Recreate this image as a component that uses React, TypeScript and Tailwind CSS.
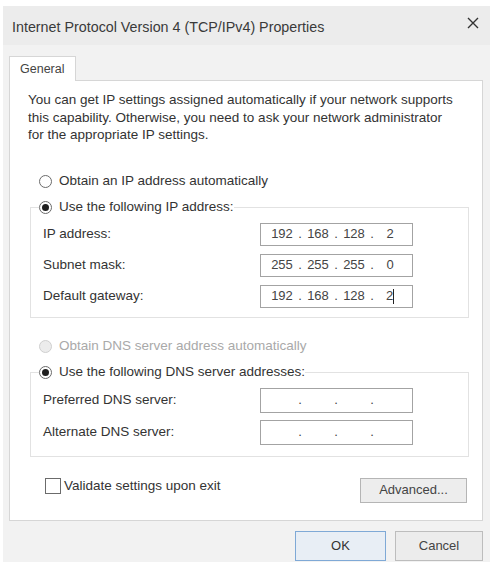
import React from "react";

const font = { fontFamily: '"Liberation Sans", Arial, sans-serif' };

function Radio({ checked, disabled, label }: { checked?: boolean; disabled?: boolean; label: string }) {
  return (
    <div className="flex items-center h-[17px] gap-[7px]">
      <span
        className={`w-[13px] h-[13px] rounded-full border flex items-center justify-center shrink-0 ${
          disabled ? "border-[#cfcfcf] bg-[#ececec]" : "border-[#6b6b6b] bg-white"
        }`}
      >
        {checked && <span className="w-[7px] h-[7px] rounded-full bg-[#1f1f1f]" />}
      </span>
      <span className={disabled ? "text-[#a9a9a9]" : "text-[#333]"}>{label}</span>
    </div>
  );
}

function IpBox({ parts, h, caret }: { parts?: string[]; h: string; caret?: boolean }) {
  const vals = parts ?? ["", "", "", ""];
  return (
    <div className={`w-[153px] ${h} border border-[#a3a3a3] bg-white flex items-center pl-[6px] text-[13px] text-[#444]`}>
      {vals.map((v, i) => (
        <React.Fragment key={i}>
          <span className="w-[30px] text-center">
            {v}
            {caret && i === 3 && <span className="inline-block w-px h-[15px] bg-[#222] align-middle" />}
          </span>
          {i < 3 && <span className="w-[6px] text-center">.</span>}
        </React.Fragment>
      ))}
    </div>
  );
}

function Row({ label, children }: { label: string; children: React.ReactNode }) {
  return (
    <div className="flex items-center pl-[4px] pr-[47px]">
      <span className="flex-1 text-[#333]">{label}</span>
      {children}
    </div>
  );
}

export default function App() {
  return (
    <div className="w-[490px] h-[562px] bg-white pt-[6px] pl-[3px] overflow-hidden text-[13.5px]" style={font}>
      <div className="h-[556px] bg-[#f2f2f2] flex flex-col">
        {/* title bar */}
        <div className="h-[39px] bg-[#ececec] flex items-center justify-between pl-[9px] pr-[8px] pt-[4px]">
          <span className="text-[14.3px] text-[#3a3a3a]">Internet Protocol Version 4 (TCP/IPv4) Properties</span>
          <svg width="12" height="12" viewBox="0 0 12 12" className="mb-[10px] mr-[3px]">
            <path d="M1 1 L11 11 M11 1 L1 11" stroke="#333" strokeWidth="1.4" />
          </svg>
        </div>

        {/* tab strip */}
        <div className="pl-[6px] pr-[7px] pt-[11px] flex flex-col">
          <div className="w-[67px] h-[25px] bg-white border border-b-0 border-[#d6d6d6] flex items-center pl-[10px] text-[12.5px] text-[#444] relative z-10 mb-[-1px]">
            General
          </div>

          {/* panel */}
          <div className="h-[441px] bg-white border border-[#d6d6d6] flex flex-col">
            <p className="ml-[18px] mt-[10px] leading-[17.5px] text-[#333]">
              You can get IP settings assigned automatically if your network supports
              <br />
              this capability. Otherwise, you need to ask your network administrator
              <br />
              for the appropriate IP settings.
            </p>

            <div className="ml-[29px] mt-[29px]">
              <Radio label="Obtain an IP address automatically" />
            </div>

            <fieldset className="ml-[20px] mr-[13px] mt-[9px] border border-[#e2e2e2] px-[8px] pb-[9px]">
              <legend>
                <Radio checked label="Use the following IP address:" />
              </legend>
              <div className="flex flex-col gap-[8px] mt-[7px]">
                <Row label="IP address:">
                  <IpBox h="h-[23px]" parts={["192", "168", "128", "2"]} />
                </Row>
                <Row label="Subnet mask:">
                  <IpBox h="h-[23px]" parts={["255", "255", "255", "0"]} />
                </Row>
                <Row label="Default gateway:">
                  <IpBox h="h-[23px]" parts={["192", "168", "128", "2"]} caret />
                </Row>
              </div>
            </fieldset>

            <div className="ml-[29px] mt-[20px]">
              <Radio disabled label="Obtain DNS server address automatically" />
            </div>

            <fieldset className="ml-[20px] mr-[13px] mt-[9px] border border-[#e2e2e2] px-[8px] pb-[11px]">
              <legend>
                <Radio checked label="Use the following DNS server addresses:" />
              </legend>
              <div className="flex flex-col gap-[7px] mt-[7px]">
                <Row label="Preferred DNS server:">
                  <IpBox h="h-[25px]" />
                </Row>
                <Row label="Alternate DNS server:">
                  <IpBox h="h-[25px]" />
                </Row>
              </div>
            </fieldset>

            <div className="ml-[35px] mr-[15px] mt-[19px] flex items-start justify-between">
              <div className="flex items-center gap-[3px]">
                <span className="w-[16px] h-[16px] border border-[#6b6b6b] bg-white" />
                <span className="text-[#333]">Validate settings upon exit</span>
              </div>
              <button className="w-[107px] h-[25px] mt-[2px] border border-[#b5b5b5] bg-[#ededed] text-[13px] text-[#444]">
                Advanced...
              </button>
            </div>
          </div>
        </div>

        {/* footer */}
        <div className="flex justify-end gap-[9px] pr-[7px] pt-[10px]">
          <button className="w-[91px] h-[30px] border border-[#7fa9d6] bg-[#e8eef5] text-[13px] text-[#333]">OK</button>
          <button className="w-[88px] h-[30px] border border-[#bdbdbd] bg-[#ececec] text-[13px] text-[#444]">Cancel</button>
        </div>
      </div>
    </div>
  );
}
